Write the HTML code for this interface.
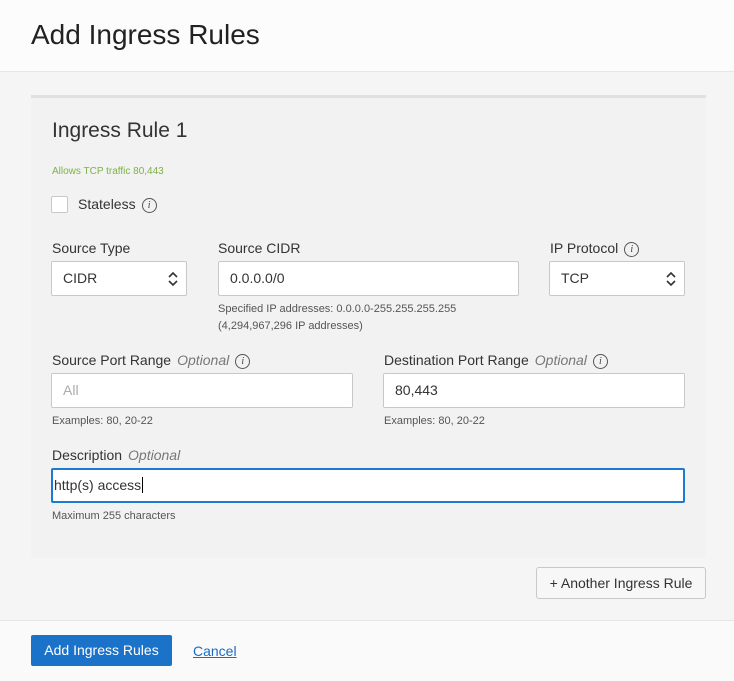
<!DOCTYPE html>
<html><head><style>
*{box-sizing:border-box;margin:0;padding:0}
body{width:734px;height:681px;position:relative;background:#f5f5f5;font-family:"Liberation Sans",Arial,sans-serif;color:#333;overflow:hidden}
.a{position:absolute}
.hdr{left:0;top:0;width:734px;height:72px;background:#fcfcfc;border-bottom:1px solid #e6e6e6}
.hdr h1{position:absolute;left:31px;top:19px;font-size:28px;font-weight:normal;color:#222}
.card{left:31px;top:95px;width:675px;height:463px;background:#f2f2f2;border-top:3px solid #e0e0e0}
.lbl{font-size:14px;color:#333}
.opt{font-style:italic;color:#777;margin-left:6px}
.inp{background:#fff;border:1px solid #c8c8c8;border-radius:2px;height:35px;font-size:14px;padding:0 11px;line-height:33px;color:#333}
.hint{font-size:11px;color:#555;line-height:17px}
.info{display:inline-block;width:15px;height:15px;border:1px solid #555;border-radius:50%;font:italic 10px "Liberation Serif",serif;text-align:center;line-height:13px;color:#444;vertical-align:middle;margin-left:6px}
.chev{position:absolute;right:8px;top:8px}
.foot{left:0;top:620px;width:734px;height:61px;background:#fafafa;border-top:1px solid #e6e6e6}
</style></head><body>
<div class="a hdr"><h1>Add Ingress Rules</h1></div>
<div class="a card"></div>
<div class="a" style="left:52px;top:119px;font-size:21px;color:#333">Ingress Rule 1</div>
<div class="a" style="left:52px;top:166px;font-size:10px;color:#7cb342">Allows TCP traffic 80,443</div>
<div class="a" style="left:51px;top:196px;width:17px;height:17px;background:#fff;border:1px solid #c8c8c8;border-radius:2px"></div>
<div class="a lbl" style="left:78px;top:196px">Stateless<span class="info">i</span></div>

<div class="a lbl" style="left:52px;top:240px">Source Type</div>
<div class="a inp" style="left:51px;top:261px;width:136px">CIDR<svg class="chev" width="10" height="18" viewBox="0 0 10 18"><path d="M1 7l4-4 4 4M1 11l4 4 4-4" fill="none" stroke="#333" stroke-width="1.6"/></svg></div>
<div class="a lbl" style="left:218px;top:240px">Source CIDR</div>
<div class="a inp" style="left:218px;top:261px;width:301px">0.0.0.0/0</div>
<div class="a hint" style="left:218px;top:301px">Specified IP addresses: 0.0.0.0-255.255.255.255<br>(4,294,967,296 IP addresses)</div>
<div class="a lbl" style="left:550px;top:240px">IP Protocol<span class="info">i</span></div>
<div class="a inp" style="left:549px;top:261px;width:136px">TCP<svg class="chev" width="10" height="18" viewBox="0 0 10 18"><path d="M1 7l4-4 4 4M1 11l4 4 4-4" fill="none" stroke="#333" stroke-width="1.6"/></svg></div>

<div class="a lbl" style="left:52px;top:352px">Source Port Range<span class="opt">Optional</span><span class="info">i</span></div>
<div class="a inp" style="left:51px;top:373px;width:302px;color:#aaa">All</div>
<div class="a hint" style="left:52px;top:413px">Examples: 80, 20-22</div>
<div class="a lbl" style="left:384px;top:352px">Destination Port Range<span class="opt">Optional</span><span class="info">i</span></div>
<div class="a inp" style="left:383px;top:373px;width:302px">80,443</div>
<div class="a hint" style="left:384px;top:413px">Examples: 80, 20-22</div>

<div class="a lbl" style="left:52px;top:447px">Description<span class="opt">Optional</span></div>
<div class="a inp" style="left:51px;top:468px;width:634px;border:2px solid #1a7ad4;line-height:31px;padding-left:1px">http(s) access<span style="border-left:1px solid #000;margin-left:1px"></span></div>
<div class="a hint" style="left:52px;top:508px">Maximum 255 characters</div>

<div class="a" style="left:536px;top:567px;width:170px;height:32px;border:1px solid #c8c8c8;border-radius:3px;background:#f7f7f7;font-size:14px;text-align:center;line-height:30px;color:#333">+ Another Ingress Rule</div>

<div class="a foot"></div>
<div class="a" style="left:31px;top:635px;width:141px;height:31px;background:#1a73c9;border-radius:2px;color:#fff;font-size:14px;text-align:center;line-height:31px">Add Ingress Rules</div>
<div class="a" style="left:193px;top:643px;font-size:14px;color:#1a6cc4;text-decoration:underline">Cancel</div>
</body></html>
